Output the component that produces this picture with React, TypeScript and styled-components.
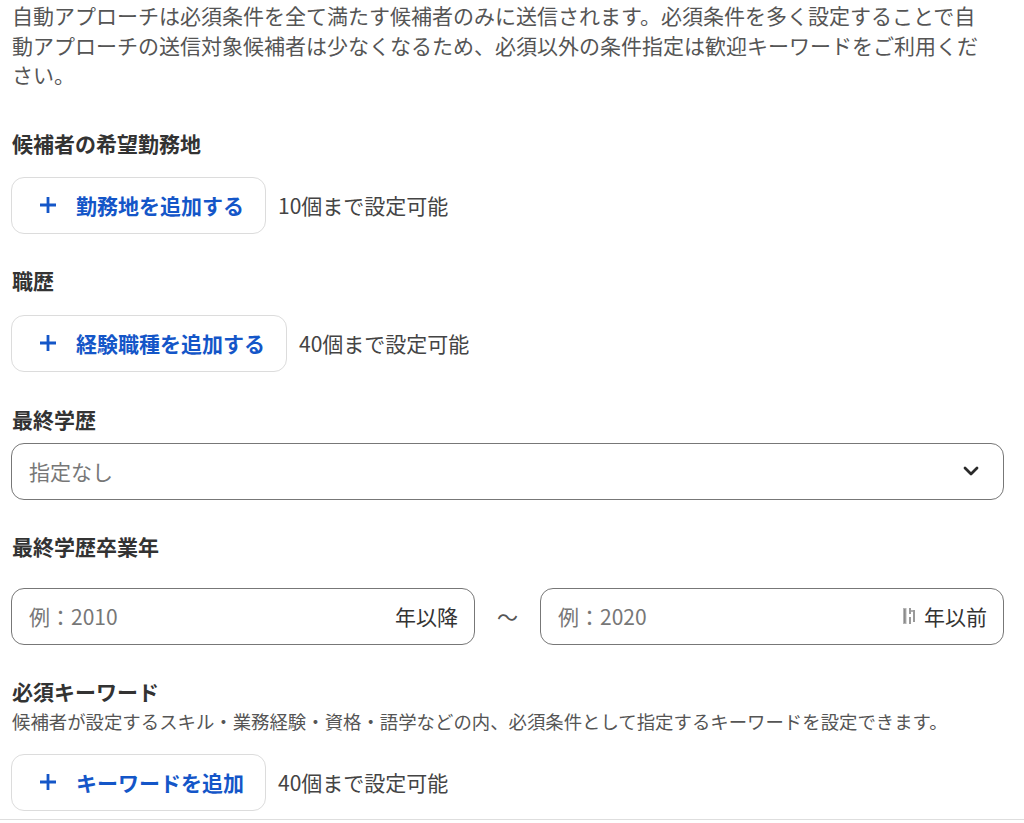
import styled, { createGlobalStyle } from 'styled-components';

const GlobalStyle = createGlobalStyle`
  * {
    box-sizing: border-box;
  }

  body {
    margin: 0;
    background: #fff;
    font-family: 'Noto Sans CJK JP', 'Noto Sans', sans-serif;
    color: #333;
  }
`;

const Page = styled.div`
  padding: 1px 20px 0 11px;
`;

const Intro = styled.p`
  margin: 0 0 0 1px;
  max-width: 980px;
  font-size: 21px;
  line-height: 29.5px;
  color: #555;
`;

const Section = styled.section<{ $top: number }>`
  margin-top: ${(props) => props.$top}px;
`;

const Label = styled.h3`
  margin: 0 0 0 1px;
  font-size: 21px;
  line-height: 30px;
  font-weight: 700;
  color: #333;
`;

const Help = styled.p`
  margin: 2px 0 0 1px;
  font-size: 18.4px;
  line-height: 26px;
  color: #555;
`;

const Body = styled.div<{ $gap: number }>`
  margin-top: ${(props) => props.$gap}px;
`;

const AddRow = styled.div`
  display: flex;
  align-items: center;
  gap: 12px;
`;

const AddButton = styled.button`
  display: inline-flex;
  align-items: center;
  gap: 19px;
  height: 57px;
  padding: 0 21px 0 27px;
  border: 1px solid #dcdcdc;
  border-radius: 13px;
  background: #fff;
  font-family: inherit;
  font-size: 21px;
  font-weight: 700;
  color: #1456c8;
  cursor: pointer;
`;

const Limit = styled.span`
  font-size: 21px;
  color: #444;
`;

const Select = styled.div`
  display: flex;
  align-items: center;
  justify-content: space-between;
  height: 57px;
  padding: 0 24px 0 17px;
  border: 1.5px solid #777;
  border-radius: 13px;
  font-size: 21px;
  color: #777;
`;

const RangeRow = styled.div`
  display: grid;
  grid-template-columns: 1fr auto 1fr;
  align-items: center;
  column-gap: 22px;
`;

const Field = styled.div`
  display: flex;
  align-items: center;
  height: 57px;
  padding: 0 16px 0 17px;
  border: 1.5px solid #777;
  border-radius: 13px;
  font-size: 21px;
`;

const Placeholder = styled.span`
  flex: 1;
  color: #777;
`;

const Suffix = styled.span`
  display: inline-flex;
  align-items: center;
  gap: 9px;
  color: #333;
`;

const Tilde = styled.span`
  font-size: 21px;
  color: #555;
`;

const Divider = styled.hr`
  margin: 8px -20px 0 -11px;
  border: 0;
  border-top: 1.5px solid #dedede;
`;

const PlusIcon = () => (
  <svg width="18" height="18" viewBox="0 0 18 18">
    <path d="M9 1v16M1 9h16" stroke="#1456c8" strokeWidth="2.8" />
  </svg>
);

const ChevronIcon = () => (
  <svg width="16" height="10" viewBox="0 0 16 10">
    <path d="M2 2l6 6 6-6" fill="none" stroke="#2a2a2a" strokeWidth="2.8" strokeLinecap="round" strokeLinejoin="round" />
  </svg>
);

const FillIcon = () => (
  <svg width="12" height="18" viewBox="0 0 12 18">
    <rect x="0" y="1" width="3.5" height="16" fill="#b5b5b5" />
    <rect x="1" y="2" width="1.5" height="14" fill="#8a8a8a" />
    <rect x="6" y="1" width="2" height="6" fill="#9a9a9a" />
    <rect x="6" y="10" width="2" height="7" fill="#9a9a9a" />
    <rect x="8" y="3" width="3" height="2" fill="#b0b0b0" />
    <rect x="10" y="3" width="2" height="12" fill="#9a9a9a" />
  </svg>
);

type AddProps = { label: string; limit: string };

const AddField = ({ label, limit }: AddProps) => (
  <AddRow>
    <AddButton type="button">
      <PlusIcon />
      {label}
    </AddButton>
    <Limit>{limit}</Limit>
  </AddRow>
);

export default function App() {
  return (
    <Page>
      <GlobalStyle />
      <Intro>
        自動アプローチは必須条件を全て満たす候補者のみに送信されます。必須条件を多く設定することで自動アプローチの送信対象候補者は少なくなるため、必須以外の条件指定は歓迎キーワードをご利用ください。
      </Intro>

      <Section $top={38}>
        <Label>候補者の希望勤務地</Label>
        <Body $gap={19}>
          <AddField label="勤務地を追加する" limit="10個まで設定可能" />
        </Body>
      </Section>

      <Section $top={31}>
        <Label>職歴</Label>
        <Body $gap={20}>
          <AddField label="経験職種を追加する" limit="40個まで設定可能" />
        </Body>
      </Section>

      <Section $top={32}>
        <Label>最終学歴</Label>
        <Body $gap={9}>
          <Select>
            指定なし
            <ChevronIcon />
          </Select>
        </Body>
      </Section>

      <Section $top={31}>
        <Label>最終学歴卒業年</Label>
        <Body $gap={27}>
          <RangeRow>
            <Field>
              <Placeholder>例：2010</Placeholder>
              <Suffix>年以降</Suffix>
            </Field>
            <Tilde>〜</Tilde>
            <Field>
              <Placeholder>例：2020</Placeholder>
              <Suffix>
                <FillIcon />
                年以前
              </Suffix>
            </Field>
          </RangeRow>
        </Body>
      </Section>

      <Section $top={31}>
        <Label>必須キーワード</Label>
        <Help>
          候補者が設定するスキル・業務経験・資格・語学などの内、必須条件として指定するキーワードを設定できます。
        </Help>
        <Body $gap={20}>
          <AddField label="キーワードを追加" limit="40個まで設定可能" />
        </Body>
      </Section>

      <Divider />
    </Page>
  );
}
